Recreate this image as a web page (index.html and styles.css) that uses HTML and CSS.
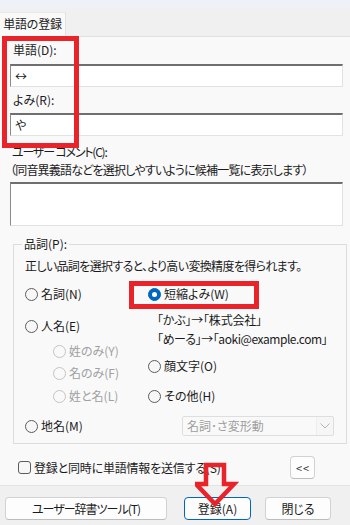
FILE: index.html
```html
<!DOCTYPE html>
<html lang="ja">
<head>
<meta charset="utf-8">
<title>単語の登録</title>
<link rel="stylesheet" href="styles.css">
</head>
<body>
<div class="win">
  <div class="topstrip"></div>
  <div class="tabbar"><div class="tab">単語の登録</div></div>
  <div class="panel">
    <div class="lbl l1">単語(D):</div>
    <div class="field f1">↔</div>
    <div class="lbl l2">よみ(R):</div>
    <div class="field f2">や</div>
    <div class="lbl l3">ユーザー コメント(C):</div>
    <div class="lbl l4">（同音異義語などを選択しやすいように候補一覧に表示します）</div>
    <div class="area"></div>
    <fieldset class="group">
      <legend>品詞(P):</legend>
      <div class="desc">正しい品詞を選択すると、より高い変換精度を得られます。</div>
      <div class="cols">
        <div class="col left">
          <div class="opt o1"><span class="radio"></span>名詞(N)</div>
          <div class="opt o2"><span class="radio"></span>人名(E)</div>
          <div class="opt sub o3 dis"><span class="radio"></span>姓のみ(Y)</div>
          <div class="opt sub o4 dis"><span class="radio"></span>名のみ(F)</div>
          <div class="opt sub o5 dis"><span class="radio"></span>姓と名(L)</div>
        </div>
        <div class="col right">
          <div class="opt r1"><span class="radio on"></span>短縮よみ(W)</div>
          <div class="ex r2">「かぶ」→「株式会社」</div>
          <div class="ex r3">「めーる」→「aoki@example.com」</div>
          <div class="opt r4"><span class="radio"></span>顔文字(O)</div>
          <div class="opt r5"><span class="radio"></span>その他(H)</div>
        </div>
      </div>
      <div class="bottomrow">
        <div class="opt place"><span class="radio"></span>地名(M)</div>
        <div class="combo">
          <span class="combo-text">名詞･さ変形動</span>
          <span class="combo-btn"><svg width="10" height="6" viewBox="0 0 10 6"><path d="M0.5 0.5 L5 5 L9.5 0.5" fill="none" stroke="#b4b4b4" stroke-width="1"/></svg></span>
        </div>
      </div>
    </fieldset>
    <div class="sendrow">
      <div class="check"><span class="box"></span>登録と同時に単語情報を送信する(S)</div>
      <div class="btn small">&lt;&lt;</div>
    </div>
  </div>
  <div class="footer">
    <div class="btn b1">ユーザー辞書ツール(T)</div>
    <div class="btn b2 default">登録(A)</div>
    <div class="btn b3">閉じる</div>
  </div>

  <div class="mark mark1"></div>
  <div class="mark mark2"></div>
  <svg class="arrow" width="50" height="50" viewBox="0 0 50 50">
    <polygon points="11,5 29,5 29,24 39,24 20,44 1,24 11,24" fill="none" stroke="#e8232a" stroke-width="4.5" stroke-linejoin="miter"/>
  </svg>
</div>
</body>
</html>
```

FILE: styles.css
```css
* { box-sizing: border-box; }
html, body { margin: 0; padding: 0; }
body {
  width: 350px;
  height: 525px;
  overflow: hidden;
  background: #f9f9f9;
  font-family: "Noto Sans CJK JP", "Noto Sans", sans-serif;
  font-size: 12px;
  line-height: 16px;
  color: #1b1b1b;
  font-feature-settings: "palt";
}
.win {
  position: relative;
  width: 350px;
  height: 525px;
}
.topstrip {
  height: 7px;
  background: #eef2f8;
}
.tabbar {
  height: 30px;
  background: #f0f0f0;
  border-bottom: 1px solid #e2e2e2;
  position: relative;
}
.tab {
  position: absolute;
  left: 0;
  top: 5px;
  width: 66px;
  height: 25px;
  background: #f9f9f9;
  border-right: 1px solid #e2e2e2;
  border-top: 1px solid #e8e8e8;
  text-align: center;
  line-height: 22px;
  letter-spacing: -0.2px;
}
.panel {
  height: 448px;
  padding: 0 7px 0 10px;
  overflow: hidden;
}
.lbl { padding-left: 3px; white-space: nowrap; }
.l1 { margin-top: 5px; }
.l2 { margin-top: 5px; }
.l3 { margin-top: 8px; padding-left: 2px; letter-spacing: -1.2px; }
.l4 { margin-top: 2px; padding-left: 0; letter-spacing: -0.8px; }
.field {
  height: 23px;
  margin-top: 6px;
  background: #ffffff;
  border-style: solid;
  border-width: 2px 1px 1px 1px;
  border-color: #6f6f6f #e2e2e2 #e2e2e2 #8a8a8a;
  padding-left: 4px;
  line-height: 19px;
}
.f2 { margin-top: 5px; }
.area {
  height: 44px;
  margin-top: 4px;
  background: #ffffff;
  border-style: solid;
  border-width: 2px 1px 1px 1px;
  border-color: #6f6f6f #e2e2e2 #e2e2e2 #8a8a8a;
}
.group {
  width: 334px;
  margin: 10px 0 0 3px;
  padding: 0 0 7px 11px;
  border: 1px solid #dcdcdc;
  min-width: 0;
}
.group legend {
  margin-left: -3px;
  padding: 0 2px;
  line-height: 16px;
}
.desc { margin-top: 6px; white-space: nowrap; letter-spacing: -0.65px; }
.cols { display: flex; }
.col { display: flex; flex-direction: column; }
.left { width: 123px; }
.opt {
  display: flex;
  align-items: center;
  white-space: nowrap;
  height: 16px;
}
.radio {
  width: 13px;
  height: 13px;
  border-radius: 50%;
  border: 1px solid #5c5c5c;
  background: #f7f7f7;
  margin-right: 3px;
  flex: none;
  position: relative;
}
.radio.on {
  background: #0067c0;
  border-color: #0067c0;
}
.radio.on::after {
  content: "";
  position: absolute;
  left: 3px;
  top: 3px;
  width: 5px;
  height: 5px;
  border-radius: 50%;
  background: #ffffff;
}
.dis { color: #a0a0a0; }
.dis .radio { border-color: #c4c4c4; background: #f9f9f9; }
.sub { margin-left: 28px; }
.o1 { margin-top: 12px; }
.o2 { margin-top: 16px; }
.o3 { margin-top: 9px; }
.o4 { margin-top: 6px; }
.o5 { margin-top: 7px; }
.r1 { margin-top: 12px; }
.ex { white-space: nowrap; padding-left: 9px; }
.r2 { margin-top: 10px; letter-spacing: -0.2px; }
.r3 { margin-top: 3px; letter-spacing: -0.45px; }
.r4 { margin-top: 11px; }
.r5 { margin-top: 14px; }
.bottomrow {
  display: flex;
  align-items: center;
  margin-top: 12px;
  height: 20px;
}
.place { width: 157px; }
.combo {
  width: 152px;
  height: 20px;
  display: flex;
  align-items: center;
  border: 1px solid #dedede;
  background: #f6f6f6;
  border-radius: 2px;
}
.combo-text {
  flex: 1;
  height: 18px;
  line-height: 17px;
  color: #9e9e9e;
  padding-left: 4px;
  border-right: 1px solid #ededed;
  background: #f9f9f9;
}
.combo-btn {
  width: 16px;
  display: flex;
  justify-content: center;
  align-items: center;
}
.sendrow {
  display: flex;
  align-items: center;
  justify-content: space-between;
  margin-top: 12px;
  height: 23px;
  padding-left: 8px;
  padding-right: 28px;
}
.check { display: flex; align-items: center; white-space: nowrap; letter-spacing: -0.2px; }
.box {
  width: 13px;
  height: 13px;
  border: 1px solid #5c5c5c;
  border-radius: 3px;
  background: #f7f7f7;
  margin-right: 3px;
}
.btn {
  height: 23px;
  background: #fdfdfd;
  border: 1px solid #d2d2d2;
  border-bottom-color: #bdbdbd;
  border-radius: 4px;
  display: flex;
  align-items: center;
  justify-content: center;
  white-space: nowrap;
}
.small {
  width: 25px;
  font-size: 11px;
  letter-spacing: 1px;
  color: #333;
  padding-left: 1px;
}
.footer {
  height: 40px;
  background: #f0f0f0;
  border-top: 1px solid #e4e4e4;
  display: flex;
  padding: 11px 0 0 5px;
}
.b1 { width: 162px; letter-spacing: -1px; }
.b2 { width: 67px; margin-left: 17px; }
.b3 { width: 66px; margin-left: 14px; }
.default { border-color: #0067c0; }

.mark {
  position: absolute;
  border: 5px solid #e8232a;
}
.mark1 { left: 2px; top: 36px; width: 77px; height: 112px; }
.mark2 { left: 129px; top: 281px; width: 130px; height: 28px; }
.arrow {
  position: absolute;
  left: 195px;
  top: 460px;
}
```
